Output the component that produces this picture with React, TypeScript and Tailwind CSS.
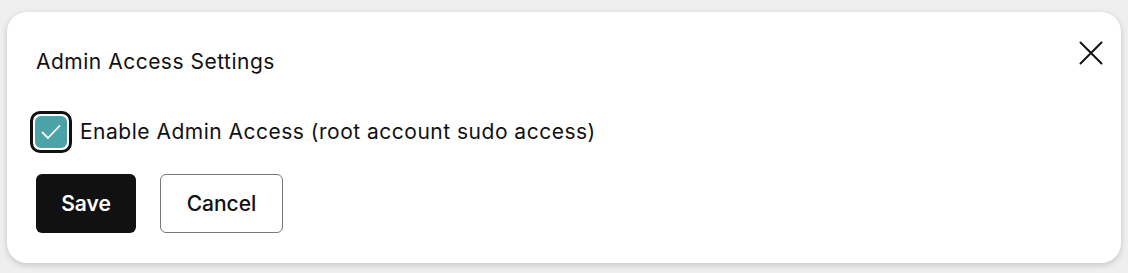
import React, { useState } from "react"

const App = () => {
  const [checked, setChecked] = useState(true)

  return (
    <div className="w-full h-[273px] bg-[#efefef] pt-[12px] pl-[7px] pr-[7px] font-['Inter',_sans-serif] text-[#111]">
      <div className="relative h-[251px] rounded-[20px] bg-white shadow-[0_2px_6px_rgba(0,0,0,0.18)] px-[29px] pt-[37px]">
        {/* Close button */}
        <button className="absolute right-[18px] top-[29px] w-6 h-6 text-[#111]" aria-label="Close">
          <svg viewBox="0 0 24 24" width="24" height="24" fill="none" stroke="currentColor" strokeWidth="2" strokeLinecap="round">
            <path d="M1.5 1.5 L22.5 22.5 M22.5 1.5 L1.5 22.5" />
          </svg>
        </button>

        <h2 className="text-[21px] leading-[26px] font-normal tracking-[0.5px]">Admin Access Settings</h2>

        <label className="mt-[36px] flex items-center gap-[8px] cursor-pointer">
          <span
            onClick={() => setChecked(!checked)}
            className="w-[42px] h-[42px] rounded-[10px] border-[3px] border-[#111] p-[2px] -ml-[6px] flex"
          >
            <span className="flex-1 rounded-[6px] bg-[#4ca3a7] flex items-center justify-center">
              {checked && (
                <svg viewBox="0 0 24 24" width="24" height="24" fill="none" stroke="white" strokeWidth="1.8" strokeLinecap="round" strokeLinejoin="round">
                  <path d="M3.5 12.5 L9 18 L20.5 6" />
                </svg>
              )}
            </span>
          </span>
          <span className="text-[21px] leading-[26px] tracking-[0.5px]">Enable Admin Access (root account sudo access)</span>
        </label>

        <div className="mt-[21px] flex gap-[24px]">
          <button className="w-[100px] h-[59px] rounded-[6px] bg-[#111] text-white text-[21px] font-semibold">Save</button>
          <button className="w-[123px] h-[59px] rounded-[6px] border border-[#777] bg-white text-[#111] text-[21px] font-medium">Cancel</button>
        </div>
      </div>
    </div>
  )
}

export default App
